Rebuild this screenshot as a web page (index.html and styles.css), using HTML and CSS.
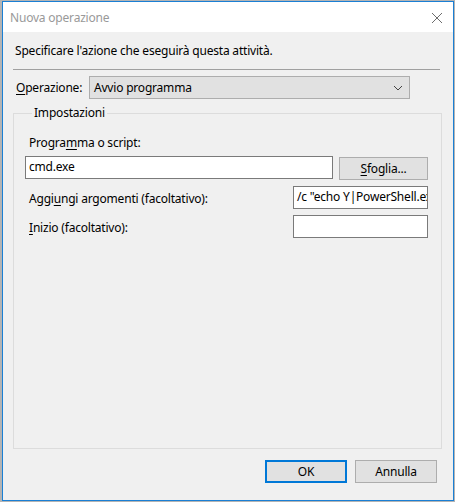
FILE: index.html
```html
<!DOCTYPE html>
<html lang="it">
<head>
  <meta charset="UTF-8" />
  <title>Nuova operazione</title>
  <link rel="stylesheet" href="styles.css">
</head>
<body>
  <div class="window">
    <div class="titlebar">
      <span class="title">Nuova operazione</span>
      <svg class="close" width="12" height="12" viewBox="0 0 12 12">
        <path d="M1 1 L11 11 M11 1 L1 11" stroke="#6d6d6d" stroke-width="1" fill="none" />
      </svg>
    </div>

    <div class="content">
      <p class="intro">Specificare l'azione che eseguirà questa attività.</p>
      <div class="sep"></div>

      <div class="op-row">
        <label class="op-label"><u>O</u>perazione:</label>
        <div class="select">
          <span>Avvio programma</span>
          <svg class="chevron" width="10" height="6" viewBox="0 0 10 6">
            <path d="M1 1 L5 5 L9 1" stroke="#444" stroke-width="1" fill="none" />
          </svg>
        </div>
      </div>

      <fieldset class="group">
        <legend>Impostazioni</legend>

        <div class="field-label">Progra<u>m</u>ma o script:</div>
        <div class="prog-row">
          <div class="input wide">cmd.exe</div>
          <div class="btn browse"><u>S</u>foglia...</div>
        </div>

        <div class="arg-row first">
          <span class="field-label">Aggi<u>u</u>ngi argomenti (facoltativo):</span>
          <div class="input short">/c "echo Y|PowerShell.exe</div>
        </div>
        <div class="arg-row">
          <span class="field-label"><u>I</u>nizio (facoltativo):</span>
          <div class="input short"></div>
        </div>
      </fieldset>

      <div class="actions">
        <div class="btn default">OK</div>
        <div class="btn">Annulla</div>
      </div>
    </div>
  </div>
</body>
</html>
```

FILE: styles.css
```css
* {
  box-sizing: border-box;
  margin: 0;
  padding: 0;
}

body {
  background: #b4b4b4;
  font-family: 'Noto Sans', 'Open Sans', sans-serif;
  font-size: 12px;
  line-height: 16px;
  letter-spacing: -0.2px;
  color: #000;
}

u {
  text-decoration: underline;
  text-underline-offset: 2px;
}

.window {
  margin: 1px 0 0 2px;
  width: 452px;
  height: 500px;
  border: 1px solid #1a7fd4;
  background: #f0f0f0;
  display: flex;
  flex-direction: column;
}

.titlebar {
  height: 30px;
  background: #fff;
  display: flex;
  align-items: center;
  justify-content: space-between;
  padding: 1px 10px 0 7px;
}

.title {
  color: #999;
}

.content {
  flex: 1;
  padding: 11px 12px 0 10px;
  display: flex;
  flex-direction: column;
}

.intro {
  padding-left: 2px;
}

.sep {
  margin-top: 10px;
  margin-right: 1px;
  height: 1px;
  background: #a0a0a0;
}

.op-row {
  margin-top: 6px;
  display: flex;
  align-items: center;
}

.op-label {
  width: 76px;
  padding-left: 3px;
}

.select {
  width: 321px;
  height: 23px;
  background: #e1e1e1;
  border: 1px solid #adadad;
  display: flex;
  align-items: center;
  justify-content: space-between;
  padding: 0 6px 0 4px;
}

.group {
  margin-top: 6px;
  height: 344px;
  border: 1px solid #dcdcdc;
  padding: 14px 13px 0 11px;
}

.group legend {
  margin-left: 7px;
  padding: 0 2px;
}

.field-label {
  padding-left: 4px;
}

.input {
  height: 23px;
  background: #fff;
  border: 1px solid #7a7a7a;
  padding: 2px 3px 0;
  white-space: nowrap;
  overflow: hidden;
}

.prog-row {
  margin-top: 5px;
  display: flex;
  gap: 6px;
}

.input.wide {
  width: 308px;
}

.input.short {
  width: 135px;
}

.btn {
  height: 23px;
  background: #e1e1e1;
  border: 1px solid #adadad;
  display: flex;
  align-items: center;
  justify-content: center;
}

.browse {
  margin-top: 1px;
  width: 89px;
}

.arg-row {
  display: flex;
  justify-content: space-between;
  align-items: center;
  margin-top: 6px;
}

.arg-row .field-label {
  padding-top: 3px;
}

.arg-row.first {
  margin-top: 6px;
}

.actions {
  margin-top: 11px;
  display: flex;
  justify-content: flex-end;
  gap: 8px;
  padding-right: 4px;
}

.actions .btn {
  width: 82px;
}

.btn.default {
  border: 2px solid #0078d7;
}
```
